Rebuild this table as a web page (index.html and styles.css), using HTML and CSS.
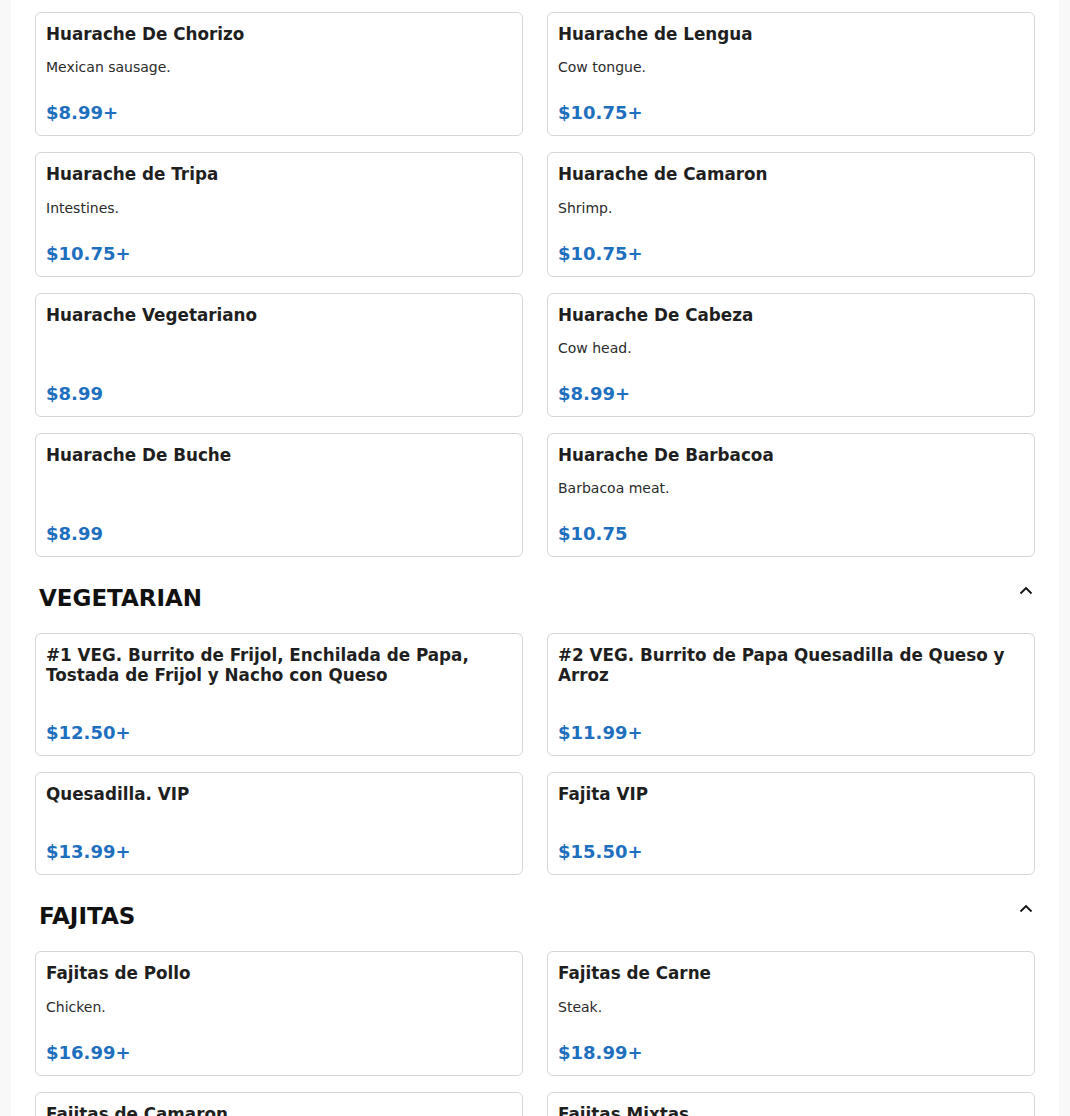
FILE: index.html
```html
<!DOCTYPE html>
<html lang="en">
<head>
<meta charset="utf-8">
<title>Menu</title>
<link rel="stylesheet" href="styles.css">
</head>
<body>
<main class="page">
  <section class="section">
    <div class="grid">
      <div class="card"><h3 class="title">Huarache De Chorizo</h3><p class="desc">Mexican sausage.</p><div class="price">$8.99+</div></div>
      <div class="card"><h3 class="title">Huarache de Lengua</h3><p class="desc">Cow tongue.</p><div class="price">$10.75+</div></div>
      <div class="card"><h3 class="title">Huarache de Tripa</h3><p class="desc">Intestines.</p><div class="price">$10.75+</div></div>
      <div class="card"><h3 class="title">Huarache de Camaron</h3><p class="desc">Shrimp.</p><div class="price">$10.75+</div></div>
      <div class="card"><h3 class="title">Huarache Vegetariano</h3><div class="price">$8.99</div></div>
      <div class="card"><h3 class="title">Huarache De Cabeza</h3><p class="desc">Cow head.</p><div class="price">$8.99+</div></div>
      <div class="card"><h3 class="title">Huarache De Buche</h3><div class="price">$8.99</div></div>
      <div class="card"><h3 class="title">Huarache De Barbacoa</h3><p class="desc">Barbacoa meat.</p><div class="price">$10.75</div></div>
    </div>
  </section>
  <section class="section">
    <div class="section-head">
      <h2 class="section-title">VEGETARIAN</h2>
      <svg class="chevron" width="16" height="16" viewBox="0 0 16 16"><path d="M2.5 10.5 L8 5 L13.5 10.5" fill="none" stroke="#111" stroke-width="1.8"/></svg>
    </div>
    <div class="grid">
      <div class="card"><h3 class="title">#1 VEG. Burrito de Frijol, Enchilada de Papa, Tostada de Frijol y Nacho con Queso</h3><div class="price">$12.50+</div></div>
      <div class="card"><h3 class="title">#2 VEG. Burrito de Papa Quesadilla de Queso y Arroz</h3><div class="price">$11.99+</div></div>
      <div class="card"><h3 class="title">Quesadilla. VIP</h3><div class="price">$13.99+</div></div>
      <div class="card"><h3 class="title">Fajita VIP</h3><div class="price">$15.50+</div></div>
    </div>
  </section>
  <section class="section">
    <div class="section-head">
      <h2 class="section-title">FAJITAS</h2>
      <svg class="chevron" width="16" height="16" viewBox="0 0 16 16"><path d="M2.5 10.5 L8 5 L13.5 10.5" fill="none" stroke="#111" stroke-width="1.8"/></svg>
    </div>
    <div class="grid">
      <div class="card"><h3 class="title">Fajitas de Pollo</h3><p class="desc">Chicken.</p><div class="price">$16.99+</div></div>
      <div class="card"><h3 class="title">Fajitas de Carne</h3><p class="desc">Steak.</p><div class="price">$18.99+</div></div>
      <div class="card"><h3 class="title">Fajitas de Camaron</h3><p class="desc">Shrimp.</p><div class="price">$18.99+</div></div>
      <div class="card"><h3 class="title">Fajitas Mixtas</h3><p class="desc">Mixed.</p><div class="price">$18.99+</div></div>
    </div>
  </section>
</main>
</body>
</html>
```
FILE: styles.css
```css
html, body {
  margin: 0;
  padding: 0;
}
body {
  background: #f8f8f8;
  font-family: "DejaVu Sans", "Liberation Sans", sans-serif;
  color: #1f1f1f;
}
.page {
  width: 1048px;
  margin: 0 auto;
  background: #fff;
  padding: 12px 24px 40px;
  box-sizing: border-box;
  min-height: 1116px;
}
.grid {
  display: grid;
  grid-template-columns: 1fr 1fr;
  column-gap: 24px;
  row-gap: 16px;
}
.card {
  border: 1px solid #d6d6d6;
  border-radius: 6px;
  padding: 11px 10px 9px;
  display: flex;
  flex-direction: column;
  background: #fff;
}
.title {
  margin: 0 0 12px;
  font-size: 16.8px;
  line-height: 20px;
  font-weight: bold;
  color: #1f1f1f;
}
.desc {
  margin: 1.33px 0 0;
  font-size: 14px;
  line-height: 20px;
  color: #2b2b2b;
}
.price {
  margin-top: auto;
  padding-top: 23px;
  font-size: 18px;
  line-height: 26px;
  font-weight: bold;
  color: #1f6fbf;
}
.section-head {
  display: flex;
  justify-content: space-between;
  align-items: flex-start;
  padding: 27px 0 21px 4px;
}
.section-title {
  margin: 0;
  font-size: 23px;
  line-height: 28px;
  font-weight: bold;
  color: #111;
}
.chevron {
  margin-top: -1px;
  margin-right: 1px;
}
```
